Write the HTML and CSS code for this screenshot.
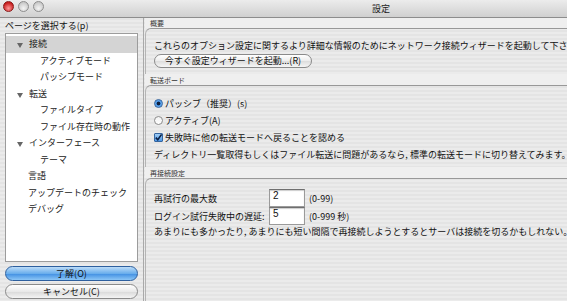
FILE: index.html
```html
<!DOCTYPE html>
<html lang="ja">

<head>
    <meta charset="UTF-8">
    <meta name="viewport" content="width=device-width, initial-scale=1.0">
    <title>設定</title>
    <link rel="stylesheet" href="styles.css">
</head>

<body>
    <div class="window">
        <div class="titlebar">
            <div class="lights">
                <span class="light red"></span>
                <span class="light"></span>
                <span class="light"></span>
            </div>
            <div class="title">設定</div>
        </div>

        <div class="main">
            <!-- left: page list + buttons -->
            <aside class="sidebar">
                <div class="side-label">ページを選択する(p)</div>
                <ul class="tree">
                    <li class="node selected"><span class="arrow"></span>接続</li>
                    <li class="leaf">アクティブモード</li>
                    <li class="leaf">パッシブモード</li>
                    <li class="node"><span class="arrow"></span>転送</li>
                    <li class="leaf">ファイルタイプ</li>
                    <li class="leaf">ファイル存在時の動作</li>
                    <li class="node"><span class="arrow"></span>インターフェース</li>
                    <li class="leaf">テーマ</li>
                    <li class="plain">言語</li>
                    <li class="plain">アップデートのチェック</li>
                    <li class="plain">デバッグ</li>
                </ul>
                <div class="actions">
                    <button class="btn default">了解(O)</button>
                    <button class="btn">キャンセル(C)</button>
                </div>
            </aside>

            <!-- right: settings groups -->
            <section class="pane">
                <div class="group">
                    <div class="group-title">概要</div>
                    <div class="group-box first">
                        <p class="line">これらのオプション設定に関するより詳細な情報のためにネットワーク接続ウィザードを起動して下さい。</p>
                        <button class="pill">今すぐ設定ウィザードを起動...(R)</button>
                    </div>
                </div>

                <div class="group">
                    <div class="group-title">転送ボード</div>
                    <div class="group-box second">
                        <div class="opt"><span class="radio on"></span>パッシブ（推奨）(s)</div>
                        <div class="opt"><span class="radio"></span>アクティブ(A)</div>
                        <div class="opt">
                            <span class="check">
                                <svg width="9" height="9" viewBox="0 0 9 9">
                                    <path d="M1.8 4.6 L3.8 6.8 L7.6 1.4" fill="none" stroke="#0b1f44" stroke-width="1.6" />
                                </svg>
                            </span>失敗時に他の転送モードへ戻ることを認める
                        </div>
                        <div class="opt">ディレクトリ一覧取得もしくはファイル転送に問題があるなら, 標準の転送モードに切り替えてみます。</div>
                    </div>
                </div>

                <div class="group">
                    <div class="group-title short">再接続設定</div>
                    <div class="group-box third">
                        <div class="field-row">
                            <span class="field-label">再試行の最大数</span>
                            <input class="field" type="text" value="2" readonly>
                            <span class="range">(0-99)</span>
                        </div>
                        <div class="field-row">
                            <span class="field-label">ログイン試行失敗中の遅延:</span>
                            <input class="field" type="text" value="5" readonly>
                            <span class="range">(0-999 秒)</span>
                        </div>
                        <p class="line">あまりにも多かったり, あまりにも短い間隔で再接続しようとするとサーバは接続を切るかもしれない。</p>
                    </div>
                </div>
            </section>
        </div>
    </div>
</body>

</html>
```

FILE: styles.css
```css
body {
    margin: 0;
    font-family: "Noto Sans CJK JP", "Noto Sans", sans-serif;
    font-size: 9px;
    color: #111;
}

.window {
    width: 567px;
    height: 301px;
    overflow: hidden;
    background: repeating-linear-gradient(#ebebeb 0 2px, #e4e4e4 2px 4px);
}

/* title bar */
.titlebar {
    height: 17px;
    display: flex;
    align-items: center;
    background: linear-gradient(#ececec, #d0d0d0);
    border-bottom: 1px solid #8d8d8d;
}

.lights {
    display: flex;
    gap: 4px;
    padding-left: 3px;
    margin-top: -4px;
}

.light {
    width: 11px;
    height: 11px;
    border-radius: 50%;
    box-sizing: border-box;
    border: 1px solid #8e8e8e;
    background: radial-gradient(circle at 50% 70%, #f4f4f4, #b9b9b9);
}

.light.red {
    border-color: #8a1a1a;
    background: radial-gradient(circle at 50% 70%, #ff9a9a, #c81f1f 70%);
}

.title {
    margin-left: 328px;
    font-size: 9px;
    color: #222;
}

.main {
    display: flex;
    height: 283px;
}

/* sidebar */
.sidebar {
    width: 133px;
    padding: 0 5px;
    border-right: 1px solid #a9a9a9;
}

.side-label {
    height: 15px;
    line-height: 15px;
    padding-left: 0;
}

.tree {
    list-style: none;
    margin: 0;
    padding: 2px 0 0;
    height: 229px;
    box-sizing: border-box;
    background: #fff;
    border: 1px solid #9c9c9c;
}

.tree li {
    height: 16.5px;
    line-height: 16.5px;
    white-space: nowrap;
    color: #222;
}

.tree .selected {
    background: #d4d4d4;
}

.tree .node {
    padding-left: 11px;
}

.tree .leaf {
    padding-left: 34px;
}

.tree .plain {
    padding-left: 22px;
}

.arrow {
    display: inline-block;
    width: 0;
    height: 0;
    border-left: 3px solid transparent;
    border-right: 3px solid transparent;
    border-top: 5px solid #666;
    margin-right: 6px;
    vertical-align: -1px;
}

.actions {
    display: flex;
    flex-direction: column;
    gap: 3px;
    margin-top: 4px;
}

.btn {
    height: 15px;
    padding: 0;
    border-radius: 8px;
    border: 1px solid #8a8a8a;
    background: linear-gradient(#ffffff, #e9e9e9 50%, #d9d9d9 51%, #f4f4f4);
    font-family: inherit;
    font-size: 9px;
    line-height: 13px;
    color: #111;
}

.btn.default {
    border-color: #2d5f9e;
    background: linear-gradient(#bcdcf8, #6aaeec 50%, #3f8ee2 51%, #8cc6f6);
}

/* right pane */
.pane {
    flex: 1;
    overflow: hidden;
    padding-left: 1px;
}

.group-title {
    height: 10px;
    line-height: 10px;
    padding-left: 5px;
    font-size: 7px;
    color: #333;
    background: #efefef;
}

.group + .group .group-title {
    height: 11px;
    line-height: 12px;
}

.group-box {
    border-top: 1px solid #989898;
    border-left: 1px solid #b4b4b4;
    border-top-left-radius: 6px;
    padding-left: 8px;
    white-space: nowrap;
}

.group-box.first {
    padding-top: 11px;
    padding-bottom: 6px;
}

.group-box.second {
    padding-top: 9px;
    padding-bottom: 4px;
}

.group-box.third {
    padding-top: 10px;
    height: 200px;
}

.line {
    margin: 0;
    line-height: 12px;
}

.third .line {
    line-height: 14px;
}

.pill {
    display: block;
    margin-top: 2px;
    height: 14px;
    width: 158px;
    padding: 0;
    border-radius: 7px;
    border: 1px solid #8a8a8a;
    background: linear-gradient(#ffffff, #ececec 50%, #dcdcdc 51%, #f6f6f6);
    font-family: inherit;
    font-size: 9px;
    line-height: 12px;
    color: #111;
}

.opt {
    height: 17px;
    line-height: 17px;
    display: flex;
    align-items: center;
}

.radio,
.check {
    width: 9px;
    height: 9px;
    box-sizing: border-box;
    margin-right: 2px;
    flex-shrink: 0;
}

.radio {
    border-radius: 50%;
    border: 1px solid #8c8c8c;
    background: linear-gradient(#f2f2f2, #ffffff);
}

.radio.on {
    border-color: #35659f;
    background: radial-gradient(circle, #10213d 0 1.6px, #4d97e6 2.2px, #8cc3f4);
}

.check {
    border: 1px solid #35659f;
    border-radius: 1px;
    background: linear-gradient(#9fcdf6, #4d97e6);
    display: flex;
}

.check svg {
    margin: -1px;
}

.field-row {
    height: 18px;
    display: flex;
    align-items: center;
}

.field-label {
    width: 115px;
}

.field {
    width: 36px;
    height: 18px;
    box-sizing: border-box;
    margin: 0 4px 0 0;
    padding: 0 3px;
    border: 1px solid #9a9a9a;
    border-top-color: #6f6f6f;
    box-shadow: inset 0 1px 1px rgba(0, 0, 0, 0.2);
    background: #fff;
    font-family: "Liberation Sans", sans-serif;
    font-size: 10px;
    line-height: 10px;
    padding-bottom: 5px;
    color: #111;
    outline: none;
}
```
